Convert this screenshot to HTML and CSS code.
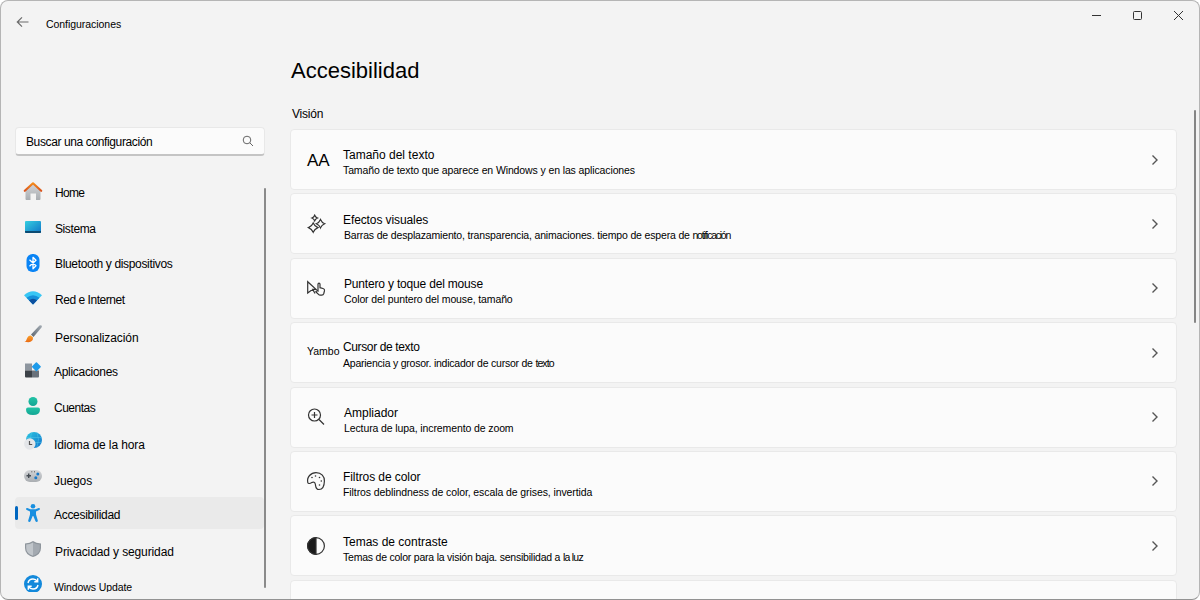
FILE: index.html
```
<!DOCTYPE html>
<html lang="es">
<head>
    <meta charset="UTF-8" />
    <title>Configuraciones</title>
    <link rel="stylesheet" href="styles.css">
</head>
<body>
<div class="window">
    <!-- Barra de título -->
    <header class="titlebar">
        <svg class="back" width="14" height="12" viewBox="0 0 14 12"><path d="M12.5 6H1.5M6 1.3L1.3 6L6 10.7" /></svg>
        <span class="app-name">Configuraciones</span>
        <div class="controls">
            <svg width="11" height="11" viewBox="0 0 11 11"><path d="M1 5.5H10" /></svg>
            <svg width="11" height="11" viewBox="0 0 11 11"><rect x="1.5" y="1.5" width="8" height="8" rx="1" /></svg>
            <svg width="11" height="11" viewBox="0 0 11 11"><path d="M1 1L10 10M10 1L1 10" /></svg>
        </div>
    </header>

    <div class="content">
        <!-- Menú lateral -->
        <aside class="sidebar">
            <div class="search">
                <span class="search-text">Buscar una configuración</span>
                <svg width="12" height="12" viewBox="0 0 12 12"><circle cx="5" cy="5" r="3.8" /><path d="M7.8 7.8L11 11" /></svg>
            </div>
            <div class="nav-wrap">
                <nav class="nav">
                    <a class="nav-item home">
                        <svg width="20" height="20" viewBox="0 0 20 20">
                            <path d="M2.5 8.5L10 2L17.5 8.5V18Q17.500 19 16.500 19H13V12.500H7.500V19H3.500Q2.500 19 2.500 18Z" fill="url(#gris)" />
                            <path d="M1.800 9.800L10 2.300L18.200 9.800" fill="none" stroke="url(#naranja)" stroke-width="2.200" stroke-linecap="round" stroke-linejoin="round" />
                        </svg>
                        <span>Home</span>
                    </a>
                    <a class="nav-item sistema">
                        <svg width="20" height="20" viewBox="0 0 20 20">
                            <rect x="2" y="4" width="16" height="12" rx="1" fill="url(#pantalla)" />
                            <path d="M2 14H18V15Q18 16 17 16H3Q2 16 2 15Z" fill="#0b4a72" />
                        </svg>
                        <span>Sistema</span>
                    </a>
                    <a class="nav-item bluetooth">
                        <svg width="20" height="20" viewBox="0 0 20 20">
                            <rect x="3.500" y="1" width="13" height="18" rx="6" fill="#0a84f5" />
                            <path d="M6.500 6.800L13 12.800L10 15.700V4.300L13 7.200L6.500 13.200" fill="none" stroke="#fff" stroke-width="1.300" stroke-linejoin="round" />
                        </svg>
                        <span>Bluetooth y dispositivos</span>
                    </a>
                    <a class="nav-item red">
                        <svg width="20" height="20" viewBox="0 0 20 20">
                            <path d="M1 7.200Q10 -0.500 19 7.200L10 16.500Z" fill="#38c6f4" />
                            <path d="M3.500 9.800Q10 4.500 16.500 9.800L10 16.500Z" fill="#168fd9" />
                            <path d="M6 12.300Q10 9 14 12.300L10.600 16Q10 16.500 9.400 16Z" fill="#0c4f9e" />
                        </svg>
                        <span>Red e Internet</span>
                    </a>
                    <a class="nav-item personal">
                        <svg width="20" height="20" viewBox="0 0 20 20">
                            <path d="M8 10.500L16.500 1.600Q18 0.600 18.800 1.800Q19.200 2.600 18.500 3.500L10.500 13Z" fill="url(#acero)" />
                            <path d="M1.500 17.500Q3.500 17 4 14.500Q5 11.500 7.800 11.500L10 13.500Q10.500 16 8 17.600Q5.500 19 1.500 17.500Z" fill="url(#pincel)" />
                        </svg>
                        <span>Personalización</span>
                    </a>
                    <a class="nav-item apps">
                        <svg width="20" height="20" viewBox="0 0 20 20">
                            <path d="M2 3.500H9V10.500H2Z" fill="#8d959e" />
                            <path d="M2 10.500H9V17.500H3Q2 17.500 2 16.500Z" fill="#3c4147" />
                            <path d="M9 10.500H16V16.500Q16 17.500 15 17.500H9Z" fill="#69717a" />
                            <rect x="10" y="3.300" width="6.800" height="6.800" rx="0.800" transform="rotate(45 13.400 6.700)" fill="#1e9bea" />
                        </svg>
                        <span>Aplicaciones</span>
                    </a>
                    <a class="nav-item cuentas">
                        <svg width="20" height="20" viewBox="0 0 20 20">
                            <circle cx="10" cy="5.500" r="4.500" fill="url(#verde)" />
                            <path d="M5 11.500H15Q17 11.500 17 13.500Q17 19 10 19T3 13.500Q3 11.500 5 11.500Z" fill="url(#verde)" />
                        </svg>
                        <span>Cuentas</span>
                    </a>
                    <a class="nav-item idioma">
                        <svg width="20" height="20" viewBox="0 0 20 20">
                            <circle cx="11" cy="9" r="8" fill="url(#globo)" />
                            <path d="M3.500 6.500H19M3.500 11.500H19M8.500 1.500Q6 8 8.500 16M14 1.500Q17 8 14 16" fill="none" stroke="#62d8f2" stroke-opacity="0.500" stroke-width="0.700" />
                            <circle cx="6.800" cy="13" r="5.700" fill="#e3e5e8" />
                            <path d="M6.500 10V13.500H9.200" fill="none" stroke="#555" stroke-width="1.200" />
                        </svg>
                        <span>Idioma de la hora</span>
                    </a>
                    <a class="nav-item juegos">
                        <svg width="20" height="20" viewBox="0 0 20 20">
                            <rect x="1" y="3" width="18" height="12" rx="6" fill="url(#gris)" />
                            <path d="M3.500 8.800H8M5.700 6.500V11" stroke="#444b52" stroke-width="1.400" />
                            <path d="M8.300 4.800H9.300M11 4.800H12" stroke="#555" />
                            <circle cx="14.800" cy="7" r="1.500" fill="#1778c8" />
                            <circle cx="12.800" cy="10.800" r="1.500" fill="#1778c8" />
                        </svg>
                        <span>Juegos</span>
                    </a>
                    <a class="nav-item accesibilidad active">
                        <svg width="20" height="20" viewBox="0 0 20 20">
                            <circle cx="10" cy="3.200" r="2.300" fill="#188fe0" />
                            <path d="M4.300 4.900L7.500 6.200H12.500L15.700 4.900Q17 4.800 17 6Q17 6.700 16.200 7L13 8.500V11.500L14.800 17.500Q14.900 19 13.600 19Q12.800 19 12.400 18L10.300 13H9.700L7.600 18Q7.200 19 6.400 19Q5.100 19 5.200 17.500L7 11.500V8.500L3.800 7Q3 6.700 3 6Q3 4.800 4.300 4.900Z" fill="#188fe0" />
                        </svg>
                        <span>Accesibilidad</span>
                    </a>
                    <a class="nav-item privacidad">
                        <svg width="20" height="20" viewBox="0 0 20 20">
                            <path d="M10 2Q13 4.300 18 4.500V9Q18 15.500 10 18Q2 15.500 2 9V4.500Q7 4.300 10 2Z" fill="#8e959c" />
                            <path d="M10 3.500Q13 5.300 16.800 5.600V9Q16.800 14.500 10 16.800Z" fill="#a3a9b0" />
                            <path d="M10 3.500Q7 5.300 3.200 5.600V9Q3.200 14.500 10 16.800Z" fill="#c0c5ca" />
                        </svg>
                        <span>Privacidad y seguridad</span>
                    </a>
                    <a class="nav-item update">
                        <svg width="20" height="20" viewBox="0 0 20 20">
                            <circle cx="10" cy="10" r="9" fill="#1389db" />
                            <path d="M5 9Q5.800 5 10 5Q12.800 5 14.500 7.500M14.700 4.300V7.700H11.300M15 11Q14.200 15 10 15Q7.200 15 5.500 12.500M5.300 15.700V12.300H8.700" fill="none" stroke="#fff" stroke-width="1.400" />
                        </svg>
                        <span>Windows Update</span>
                    </a>
                </nav>
                <div class="nav-scroll"></div>
            </div>
        </aside>

        <!-- Opciones -->
        <main class="main">
            <h1>Accesibilidad</h1>
            <h2>Visión</h2>
            <div class="cards">
                <div class="card texto">
                    <span class="icon icon-aa">AA</span>
                    <div class="info"><p class="name">Tamaño del texto</p><p class="desc">Tamaño de texto que aparece en Windows y en las aplicaciones</p></div>
                    <svg class="chevron" width="8" height="12" viewBox="0 0 8 12"><path d="M1.500 1.500L6 6L1.500 10.500" /></svg>
                </div>
                <div class="card efectos">
                    <span class="icon"><svg width="20" height="20" viewBox="0 0 20 20"><path d="M8.700 1.200Q9.500 3.200 11.500 4Q9.500 4.800 8.700 6.800Q7.900 4.800 5.900 4Q7.900 3.200 8.700 1.200ZM14.500 5.500Q15.700 8.500 18.700 9.700Q15.700 10.900 14.500 13.900Q13.300 10.900 10.300 9.700Q13.300 8.500 14.500 5.500ZM7.200 8.900Q8.600 12.200 11.900 13.600Q8.600 15 7.200 18.300Q5.800 15 2.500 13.600Q5.800 12.200 7.200 8.900Z" /></svg></span>
                    <div class="info"><p class="name">Efectos visuales</p><p class="desc">Barras de desplazamiento, transparencia, animaciones. tiempo de espera de <span class="tight">notificación</span></p></div>
                    <svg class="chevron" width="8" height="12" viewBox="0 0 8 12"><path d="M1.500 1.500L6 6L1.500 10.500" /></svg>
                </div>
                <div class="card puntero">
                    <span class="icon"><svg width="20" height="20" viewBox="0 0 20 20"><path d="M9 15.500L7.200 12.200L5 12.500L1.700 15V3.700L10 11.300H6.800L8.500 14.500" /><path d="M12 13V6.300Q12 5.200 13 5.200T14 6.300V9.700L17 10.500Q18.800 11 18.500 12.700L17.800 15.500Q17.300 17.200 15.800 17.200H14.300Q13.200 17.200 12.500 16.300L9.800 13.800Q10.500 12.300 12 13Z" /></svg></span>
                    <div class="info"><p class="name">Puntero y toque del mouse</p><p class="desc">Color del puntero del mouse, tamaño</p></div>
                    <svg class="chevron" width="8" height="12" viewBox="0 0 8 12"><path d="M1.500 1.500L6 6L1.500 10.500" /></svg>
                </div>
                <div class="card cursor">
                    <span class="icon icon-yambo">Yambo</span>
                    <div class="info"><p class="name">Cursor de texto</p><p class="desc">Apariencia y grosor. indicador de cursor de <span class="tight">texto</span></p></div>
                    <svg class="chevron" width="8" height="12" viewBox="0 0 8 12"><path d="M1.500 1.500L6 6L1.500 10.500" /></svg>
                </div>
                <div class="card ampliador">
                    <span class="icon"><svg width="20" height="20" viewBox="0 0 20 20"><circle cx="8.500" cy="8" r="6" /><path d="M8.500 5V11M5.500 8H11.500M13 12.500L18 17.500" /></svg></span>
                    <div class="info"><p class="name">Ampliador</p><p class="desc">Lectura de lupa, incremento de zoom</p></div>
                    <svg class="chevron" width="8" height="12" viewBox="0 0 8 12"><path d="M1.500 1.500L6 6L1.500 10.500" /></svg>
                </div>
                <div class="card filtros">
                    <span class="icon"><svg width="20" height="20" viewBox="0 0 20 20"><path d="M1.800 11.500C0.500 6 5 1.600 10 1.600C15.500 1.600 18.600 5.500 18.400 10C18.300 14.500 16.500 18.500 13 18.500C9.500 18.500 9.800 15.500 9.300 13C8.900 11.200 7.500 10.500 5.800 11.500C4 12.600 2.200 13 1.800 11.500Z" /><path class="dots" d="M9.500 5H9.510M13.500 6.500H13.510M15.300 10H15.310M13.500 14H13.510M6 6.500H6.010" /></svg></span>
                    <div class="info"><p class="name">Filtros de color</p><p class="desc">Filtros deblindness de color, escala de grises, invertida</p></div>
                    <svg class="chevron" width="8" height="12" viewBox="0 0 8 12"><path d="M1.500 1.500L6 6L1.500 10.500" /></svg>
                </div>
                <div class="card contraste">
                    <span class="icon"><svg width="20" height="20" viewBox="0 0 20 20"><circle cx="10" cy="10" r="8.400" /><path class="solid" d="M10 1.600A8.400 8.400 0 0 0 10 18.400Z" /></svg></span>
                    <div class="info"><p class="name">Temas de contraste</p><p class="desc">Temas de color para la visión baja. sensibilidad a <span class="tight">la luz</span></p></div>
                    <svg class="chevron" width="8" height="12" viewBox="0 0 8 12"><path d="M1.500 1.500L6 6L1.500 10.500" /></svg>
                </div>
                <div class="card"></div>
            </div>
        </main>
        <div class="main-scroll"></div>
    </div>
</div>

<!-- Degradados de los iconos -->
<svg class="defs" width="0" height="0">
    <defs>
        <linearGradient id="gris" x1="0" y1="0" x2="0" y2="1"><stop offset="0" stop-color="#d4d6d9" /><stop offset="1" stop-color="#a9adb1" /></linearGradient>
        <linearGradient id="naranja" x1="0" y1="0" x2="0" y2="1"><stop offset="0" stop-color="#f58a1a" /><stop offset="1" stop-color="#d9541e" /></linearGradient>
        <linearGradient id="pantalla" x1="0" y1="0" x2="1" y2="1"><stop offset="0" stop-color="#35cfe0" /><stop offset="1" stop-color="#0f75c8" /></linearGradient>
        <linearGradient id="acero" x1="1" y1="0" x2="0" y2="1"><stop offset="0" stop-color="#a5adb5" /><stop offset="1" stop-color="#5d666f" /></linearGradient>
        <linearGradient id="pincel" x1="0" y1="0" x2="0" y2="1"><stop offset="0" stop-color="#f9a02c" /><stop offset="1" stop-color="#ea6a12" /></linearGradient>
        <linearGradient id="verde" x1="0" y1="0" x2="0" y2="1"><stop offset="0" stop-color="#22c3a6" /><stop offset="1" stop-color="#12a594" /></linearGradient>
        <linearGradient id="globo" x1="0" y1="0" x2="1" y2="1"><stop offset="0" stop-color="#2dc6e0" /><stop offset="1" stop-color="#1173cc" /></linearGradient>
    </defs>
</svg>
</body>
</html>
```
FILE: styles.css
```
* {
    box-sizing: border-box;
}
body {
    margin: 0;
    background: #fff;
    font-family: "Liberation Sans", Arial, sans-serif;
    color: #000;
}
.defs {
    position: absolute;
}
.window {
    height: 600px;
    background: #f3f3f3;
    border: 1px solid #b5b5b5;
    border-bottom-color: #929292;
    border-radius: 8px;
    overflow: hidden;
}
.titlebar {
    display: flex;
    height: 40px;
    padding: 0 15px;
}
.back {
    margin-top: 15px;
    fill: none;
    stroke: #6b6b6b;
    stroke-width: 1.2;
}
.app-name {
    margin: 17px 0 0 16px;
    font-size: 10.5px;
    line-height: 13px;
    letter-spacing: -0.05px;
}
.controls {
    display: flex;
    gap: 30px;
    margin: 9px 0 0 auto;
}
.controls svg {
    fill: none;
    stroke: #333;
}
.content {
    display: flex;
    height: 558px;
}

/* Menú lateral */
.sidebar {
    width: 265px;
    padding: 86px 0 0 14px;
}
.search {
    display: flex;
    align-items: center;
    justify-content: space-between;
    width: 250px;
    height: 29px;
    padding: 0 10px;
    background: #fbfbfb;
    border: 1px solid #e8e8e8;
    border-bottom: 2px solid #c4c4c4;
    border-radius: 4px;
}
.search-text {
    padding-top: 1px;
    font-size: 12px;
    letter-spacing: -0.38px;
}
.search svg {
    fill: none;
    stroke: #666;
}
.nav-wrap {
    display: flex;
    height: 417px;
    margin-top: 19px;
}
.nav {
    display: flex;
    flex-direction: column;
    gap: 3.75px;
    width: 249px;
    overflow: hidden;
}
.nav-item {
    display: flex;
    flex-shrink: 0;
    align-items: center;
    height: 32px;
    padding-left: 8px;
    border-radius: 4px;
    font-size: 12px;
    white-space: nowrap;
}
.nav-item span {
    margin: 4px 0 0 12px;
}
.home span {
    letter-spacing: -0.7px;
}
.sistema span {
    letter-spacing: -0.4px;
}
.bluetooth span {
    margin-top: 2px;
    letter-spacing: -0.33px;
}
.red span {
    letter-spacing: -0.46px;
}
.personal span {
    margin-top: 8px;
    letter-spacing: -0.08px;
}
.apps span {
    margin-left: 11px;
    letter-spacing: -0.3px;
}
.cuentas span {
    margin-left: 11px;
    letter-spacing: -0.5px;
}
.idioma span {
    margin: 8px 0 0 11px;
    letter-spacing: -0.12px;
}
.juegos span {
    margin: 8px 0 0 11px;
    letter-spacing: -0.1px;
}
.accesibilidad span {
    margin-left: 11px;
    letter-spacing: -0.3px;
}
.privacidad span {
    margin-top: 6px;
    letter-spacing: -0.12px;
}
.update span {
    margin: 5px 0 0 11px;
    font-size: 10.5px;
    letter-spacing: -0.1px;
}
.active {
    background: #eaeaea;
    padding-left: 0;
}
.active::before {
    content: "";
    width: 3px;
    height: 14px;
    margin-right: 5px;
    border-radius: 2px;
    background: #0067c0;
}
.nav-scroll {
    width: 2px;
    height: 400px;
    margin-top: 13px;
    border-radius: 1px;
    background: #8a8a8a;
}

/* Opciones */
.main {
    width: 887px;
    margin-left: 24px;
    overflow: hidden;
}
h1 {
    margin: 17px 0 0 1px;
    font-size: 22px;
    font-weight: normal;
    line-height: 26px;
}
h2 {
    margin: 23px 0 8px 2px;
    font-size: 12px;
    font-weight: normal;
    line-height: 14px;
    letter-spacing: -0.2px;
}
.cards {
    display: flex;
    flex-direction: column;
    gap: 3.4px;
}
.card {
    display: flex;
    flex-shrink: 0;
    height: 61px;
    padding: 0 17px 0 15px;
    background: #fbfbfb;
    border: 1px solid #e9e9e9;
    border-radius: 4px;
}
.icon {
    display: flex;
    align-items: center;
    width: 37px;
}
.icon svg {
    fill: none;
    stroke: #333;
    stroke-width: 1.2;
}
.icon .dots {
    stroke-width: 1.6;
    stroke-linecap: round;
}
.icon .solid {
    fill: #1a1a1a;
}
.icon-aa {
    padding: 2px 0 0 1px;
    font-size: 17px;
}
.icon-yambo {
    padding: 0 0 3px 1px;
    font-size: 10.5px;
}
.info {
    padding-top: 17px;
    white-space: nowrap;
}
.name, .desc {
    margin: 0;
}
.name {
    font-size: 12px;
    line-height: 16px;
}
.desc {
    font-size: 10.5px;
    line-height: 15px;
}
.texto .desc {
    letter-spacing: -0.115px;
}
.efectos .info, .contraste .info {
    padding-top: 18px;
}
.efectos .name {
    letter-spacing: -0.1px;
}
.efectos .desc {
    padding-left: 1px;
    letter-spacing: -0.165px;
}
.efectos .tight {
    letter-spacing: -1.25px;
}
.puntero .info, .ampliador .info {
    padding-left: 1px;
}
.puntero .name {
    letter-spacing: -0.18px;
}
.puntero .desc {
    letter-spacing: -0.12px;
}
.cursor .info {
    padding-top: 16px;
}
.cursor .name {
    letter-spacing: -0.37px;
}
.cursor .desc {
    padding-top: 1px;
    letter-spacing: -0.23px;
}
.cursor .tight {
    letter-spacing: -0.9px;
}
.ampliador .desc {
    letter-spacing: -0.11px;
}
.filtros .name {
    letter-spacing: -0.08px;
}
.filtros .desc {
    letter-spacing: -0.09px;
}
.contraste .desc {
    letter-spacing: -0.22px;
}
.contraste .tight {
    letter-spacing: -0.75px;
}
.chevron {
    align-self: center;
    margin-left: auto;
    fill: none;
    stroke: #555;
    stroke-width: 1.4;
}
.main-scroll {
    width: 2px;
    height: 213px;
    margin: 69px 0 0 17px;
    border-radius: 1px;
    background: #858585;
}
```
